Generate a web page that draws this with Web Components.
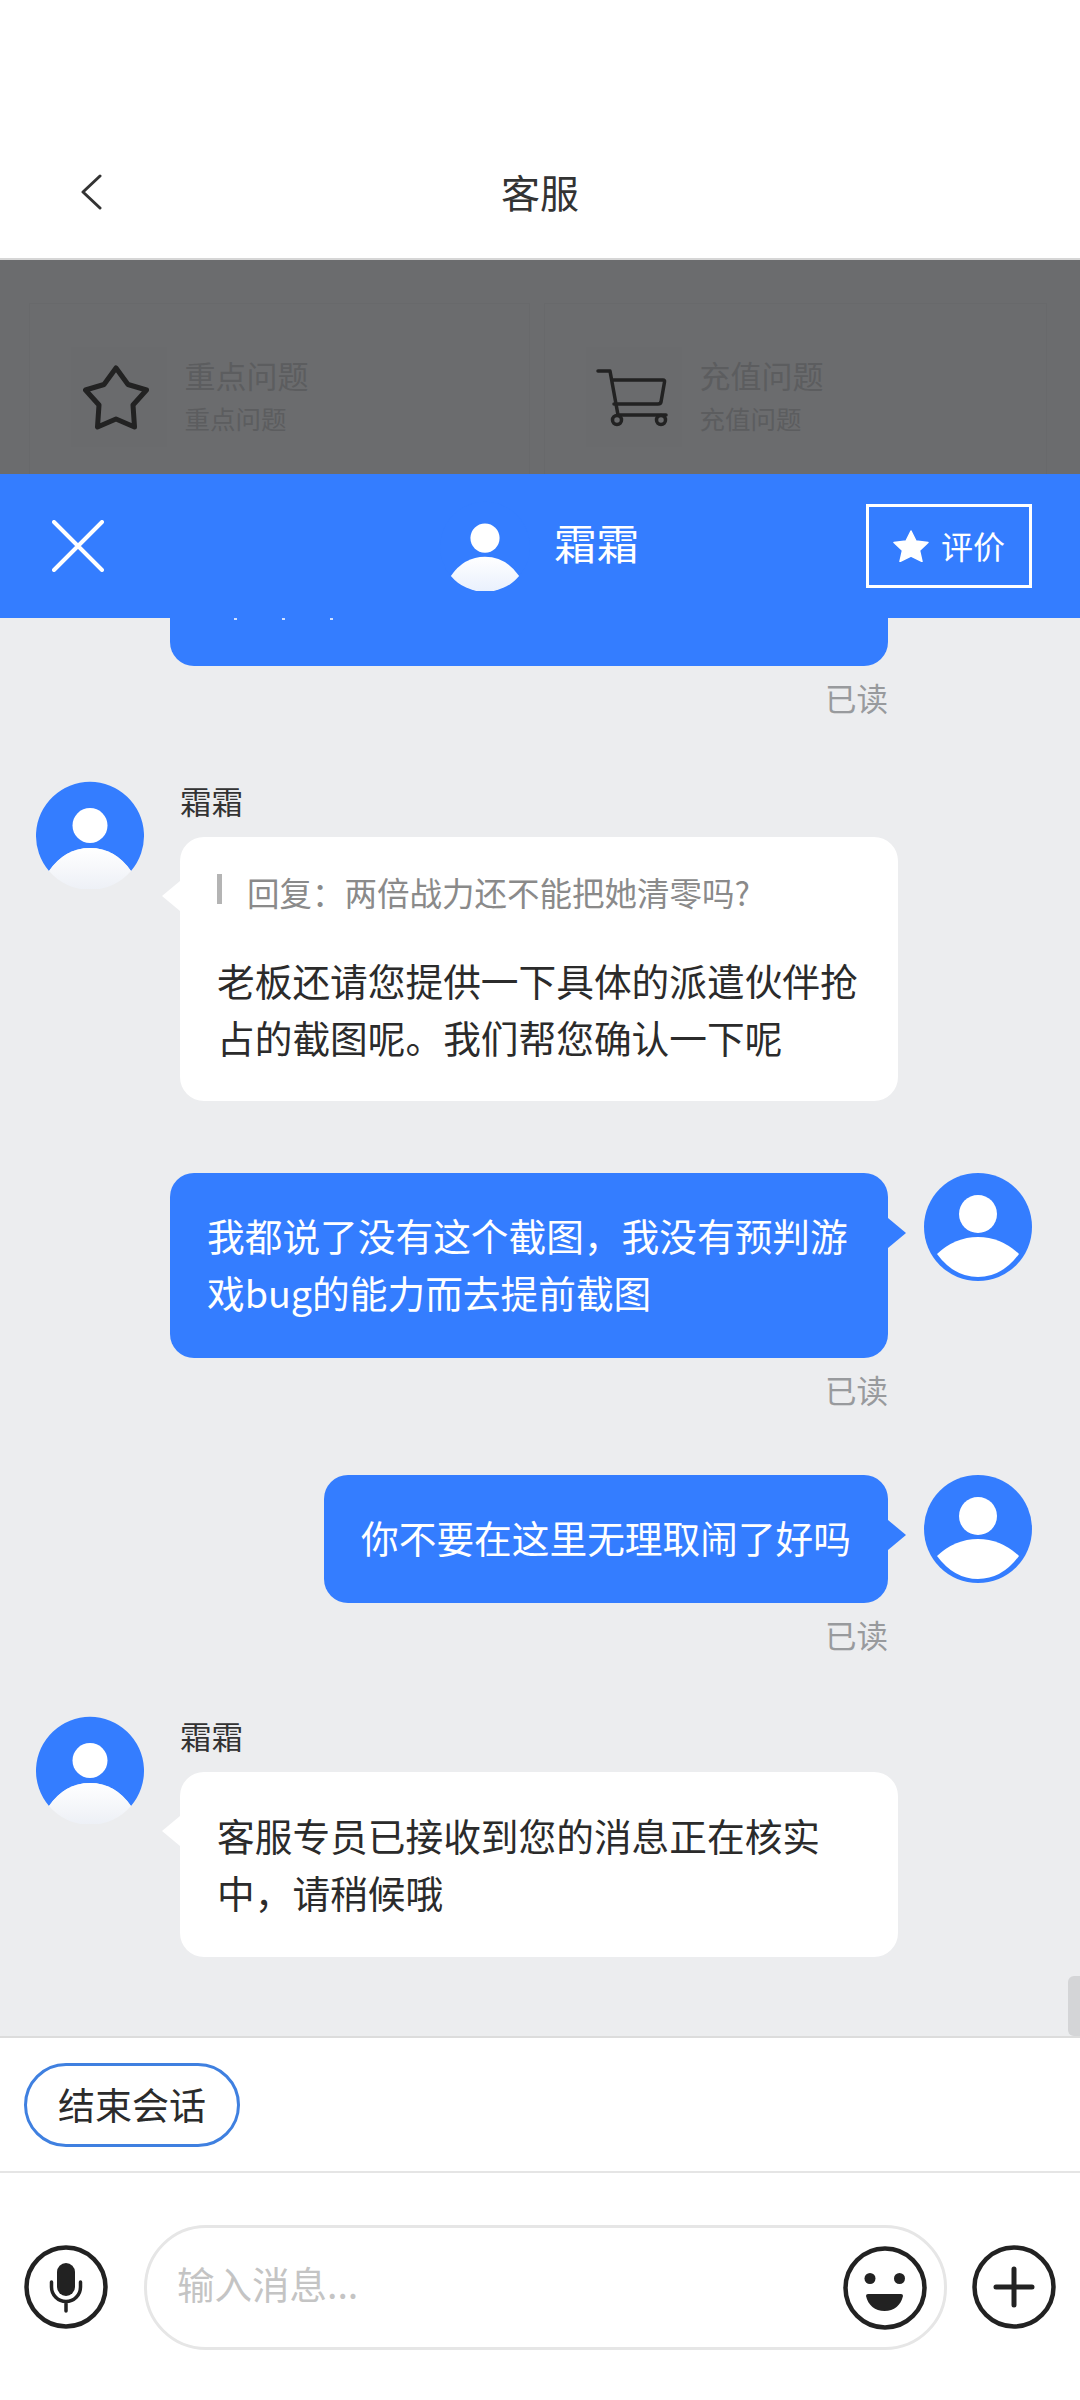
<!DOCTYPE html>
<html lang="zh-CN"><head><meta charset="utf-8"><title>客服</title>
<style>
html,body{margin:0;padding:0;background:#fff}
body{width:1080px;height:2400px;overflow:hidden;font-family:"Noto Sans CJK SC","Noto Sans",sans-serif;color:#2b2b2b}
</style></head><body>
<app-shell>
  <top-bar title-text="客服"></top-bar>
  <faq-panel></faq-panel>
  <chat-header name="霜霜"></chat-header>
  <chat-list>
    <cut-bubble></cut-bubble>
    <read-tip></read-tip>
    <msg-left name="霜霜" quote="回复：两倍战力还不能把她清零吗?" style="margin-top:58px">老板还请您提供一下具体的派遣伙伴抢占的截图呢。我们帮您确认一下呢</msg-left>
    <msg-right style="margin-top:72px">我都说了没有这个截图，我没有预判游戏bug的能力而去提前截图</msg-right>
    <read-tip></read-tip>
    <msg-right style="margin-top:60px">你不要在这里无理取闹了好吗</msg-right>
    <read-tip></read-tip>
    <msg-left name="霜霜" style="margin-top:56px">客服专员已接收到您的消息正在核实中，请稍候哦</msg-left>
  </chat-list>
  <quick-bar><pill-button>结束会话</pill-button></quick-bar>
  <input-bar></input-bar>
</app-shell>
<script>
const FONT='"Noto Sans CJK SC","Noto Sans",sans-serif';
function def(name,html){
  customElements.define(name,class extends HTMLElement{
    connectedCallback(){
      if(this.shadowRoot)return;
      const r=this.attachShadow({mode:'open'});
      r.innerHTML=typeof html==='function'?html(this):html;
    }
  });
}
const avatarSvg=(size,kind,id)=>{
  const ring=kind==='ring';
  const head=ring?'<circle cx="54" cy="41" r="19" fill="#fff"/>':'<circle cx="54" cy="44.5" r="17.5" fill="#fff"/>';
  const body=ring
    ?'<path d="M13 81Q31 64 54 64Q77 64 95 81Q78 104 54 104Q30 104 13 81Z" fill="#fff"/>'
    :`<path d="M13 90Q29 67 54 67Q79 67 95 90A54 54 0 0 1 13 90Z" fill="url(#${id})"/>`;
  const bottomStop=kind==='head'?'#e9f0fd':'#edf0f6';
  return `<svg width="${size}" height="${size}" viewBox="0 0 108 108" style="display:block;flex:none">
    <defs><linearGradient id="${id}" x1="0" y1="0" x2="0" y2="1"><stop offset="0" stop-color="#fff"/><stop offset="1" stop-color="${bottomStop}"/></linearGradient></defs>
    <path d="${kind==='left'||kind==='head'?'M13 90A54 54 0 1 1 95 90Q79 67 54 67Q29 67 13 90Z':'M0 54a54 54 0 1 0 108 0a54 54 0 1 0-108 0Z'}" fill="#347dff"/>
    ${head}${body}</svg>`;
};

def('app-shell',`<style>:host{display:flex;flex-direction:column;width:1080px;height:2400px;background:#fff}</style><slot></slot>`);

def('top-bar',el=>`<style>
:host{display:flex;align-items:center;justify-content:center;box-sizing:border-box;height:260px;padding-top:130px;padding-bottom:0;background:#fff;border-bottom:2px solid #d6d6d6;position:relative;font-family:${FONT}}
.back{position:absolute;left:78px;top:174px}
.t{font-size:39px;line-height:60px;color:#333;margin-top:-6px}
</style>
<svg class="back" width="26" height="36" viewBox="0 0 26 36"><path d="M22 2 5 18l17 16" fill="none" stroke="#333" stroke-width="3" stroke-linecap="round" stroke-linejoin="round"/></svg>
<div class="t">${el.getAttribute('title-text')}</div>`);

def('faq-panel',`<style>
:host{display:grid;grid-template-columns:501px 503px;column-gap:14px;box-sizing:border-box;height:214px;padding:43px 33px 0 29px;background:#6b6c6e;font-family:${FONT};overflow:hidden}
.card{display:flex;align-items:flex-start;border:1px solid #68696b;border-bottom:0;height:200px;box-sizing:border-box;padding:43px 0 0 41px}
.ico{width:96px;height:100px;flex:none;background:#6a6b6d}
.ico svg{display:block}
.star{margin:18px 0 0 12px}
.cart{margin:21px 0 0 10px}
.txt{margin-left:17.500px;padding-top:8px}
.a{font-size:31px;line-height:40px;color:#5c5d5f}
.b{font-size:25.500px;line-height:36px;color:#5c5d5f;margin-top:5px}
</style>
<div class="card"><div class="ico"><svg class="star" width="66" height="65" viewBox="0 0 66 65"><path d="M33 3 45 19.500 63.500 25 50 40 51.500 62 33 54 14.500 62 16 40 2.500 25 21 19.500Z" fill="none" stroke="#222" stroke-width="5" stroke-linejoin="round"/></svg></div><div class="txt"><div class="a">重点问题</div><div class="b">重点问题</div></div></div>
<div class="card"><div class="ico"><svg class="cart" width="72" height="60" viewBox="0 0 72 60"><path d="M2 3H14L22 47H70M16 12H67Q69 12 68.500 14L65 34Q64.500 36 62 36H18" fill="none" stroke="#222" stroke-width="3.500" stroke-linejoin="round" stroke-linecap="round"/><circle cx="21" cy="52" r="4.500" fill="none" stroke="#222" stroke-width="3.500"/><circle cx="65" cy="52" r="4.500" fill="none" stroke="#222" stroke-width="3.500"/></svg></div><div class="txt"><div class="a">充值问题</div><div class="b">充值问题</div></div></div>`);

def('chat-header',el=>`<style>
:host{display:flex;align-items:center;box-sizing:border-box;height:144px;padding:0 48px 0 52px;background:#347dff;color:#fff;font-family:${FONT};position:relative;z-index:1}
.x{flex:none}
.mid{display:flex;align-items:center;margin-left:336px;flex:1}
.n{font-size:42.500px;line-height:60px;margin-left:24px;margin-top:-8px}
.rate{display:flex;align-items:center;justify-content:center;gap:12px;box-sizing:border-box;width:166px;height:84px;border:3px solid #fff;font-size:32px;line-height:44px}
.rate span{margin-top:-3px}
</style>
<svg class="x" width="52" height="52" viewBox="0 0 52 52"><path d="M2 2 50 50M50 2 2 50" stroke="#fff" stroke-width="4" stroke-linecap="round"/></svg>
<div class="mid">${avatarSvg(90,'head','gh')}<span class="n">${el.getAttribute('name')}</span></div>
<div class="rate"><svg width="36" height="32" viewBox="0 0 36 32"><path d="M18 1 23 11 35 12.500 26.500 20.500 29 31.500 18 26 7 31.500 9.500 20.500 1 12.500 13 11Z" fill="#fff" stroke="#fff" stroke-width="1.500" stroke-linejoin="round"/></svg><span>评价</span></div>`);

def('chat-list',`<style>
:host{display:flex;flex-direction:column;flex:1;min-height:0;background:#ecedef;position:relative;overflow:hidden;font-family:${FONT}}
.bar{position:absolute;right:0;bottom:0;width:12px;height:60px;background:#d4d5d7;border-radius:6px 0 0 6px}
</style><slot></slot><div class="bar"></div>`);

def('cut-bubble',`<style>
:host{display:flex;box-sizing:border-box;width:718px;height:48px;margin-left:170px;background:#347dff;border-radius:0 0 24px 24px;gap:45px;padding-left:64px}
i{width:3px;height:2px;background:#cfe0ff}
</style><i></i><i></i><i></i>`);

def('read-tip',`<style>
:host{display:block;box-sizing:border-box;width:888px;margin-top:8px;height:49px;text-align:right;font-size:31.500px;line-height:46px;color:#989a9d}
</style>已读`);

def('msg-left',el=>{
  const q=el.getAttribute('quote');
  return `<style>
:host{display:flex;padding-left:36px;font-family:${FONT}}
.c{margin-left:36px;width:718px}
.n{font-size:31.500px;line-height:38px;margin-bottom:18px;color:#333}
.b{position:relative;background:#fff;border-radius:24px;padding:${q?'35px 37px 36px':'34px 37px 37px'};font-size:37.700px;line-height:57px;color:#2b2b2b}
.b::before{content:"";position:absolute;left:-18px;top:44px;width:18px;height:30px;background:#fff;clip-path:polygon(100% 0,0 50%,100% 100%)}
.q{box-sizing:border-box;height:30px;border-left:5px solid #b4b4b4;padding:3px 0 0 25px;font-size:32.500px;line-height:30px;white-space:nowrap;color:#8a8a8a;margin:2px 0 47px}
</style>${avatarSvg(108,'left','a'+Math.random().toString(36).slice(2))}
<div class="c"><div class="n">${el.getAttribute('name')}</div><div class="b">${q?`<div class="q">${q}</div>`:''}<slot></slot></div></div>`;
});

def('msg-right',`<style>
:host{display:flex;justify-content:flex-end;align-items:flex-start;padding-right:48px;font-family:${FONT}}
.b{position:relative;box-sizing:border-box;max-width:718px;background:#347dff;color:#fff;border-radius:24px;padding:33px 37px 38px;font-size:37.700px;line-height:57px;margin-right:36px}
.b::after{content:"";position:absolute;right:-18px;top:45px;width:18px;height:30px;background:#347dff;clip-path:polygon(0 0,100% 50%,0 100%)}
</style><div class="b"><slot></slot></div>`+avatarSvg(108,'ring','r'));

def('quick-bar',`<style>
:host{display:flex;align-items:flex-start;box-sizing:border-box;height:137px;padding:25px 0 0 24px;border-top:2px solid #dcdcdc;border-bottom:2px solid #e5e5e5;background:#fff}
</style><slot></slot>`);

def('pill-button',`<style>
:host{display:flex;align-items:center;justify-content:center;box-sizing:border-box;width:216px;height:84px;padding-bottom:3px;border:3px solid #3f80e0;border-radius:42px;font-size:37px;line-height:50px;color:#2b2b2b;font-family:${FONT}}
</style><slot></slot>`);

def('input-bar',`<style>
:host{display:flex;align-items:flex-start;box-sizing:border-box;flex:none;height:227px;padding:52px 24px 0 24px;background:#fff;font-family:${FONT}}
.field{display:flex;align-items:center;justify-content:space-between;box-sizing:border-box;width:803px;height:125px;margin:0 25px 0 36px;border:3px solid #e6e6e6;border-radius:62px;padding:0 17px 0 30px}
.ph{font-size:37.500px;line-height:50px;color:#c4c4c4;margin-top:-10px}
svg{display:block;flex:none}
.side{margin-top:20px}
</style>
<svg class="side" width="84" height="84" viewBox="0 0 84 84"><circle cx="42" cy="42" r="39.500" fill="none" stroke="#222" stroke-width="4.500"/><rect x="33" y="18" width="18" height="33" rx="9" fill="#222"/><path d="M27.500 37V42A14.500 14.500 0 0 0 56.500 42V37M42 56.500V66" fill="none" stroke="#222" stroke-width="3.500" stroke-linecap="round"/></svg>
<div class="field"><span class="ph">输入消息...</span>
<svg width="84" height="84" viewBox="0 0 84 84"><circle cx="42" cy="42" r="39.500" fill="none" stroke="#222" stroke-width="4.500"/><circle cx="27" cy="32.500" r="5.500" fill="#222"/><circle cx="56.500" cy="32.500" r="5.500" fill="#222"/><path d="M25 48H58Q60 48 60 50C58 59 51 65 41.500 65S25 59 23 50Q23 48 25 48Z" fill="#222"/></svg></div>
<svg class="side" width="84" height="84" viewBox="0 0 84 84"><circle cx="42" cy="42" r="39.500" fill="none" stroke="#222" stroke-width="4.500"/><path d="M24 42H60M42 24V60" stroke="#222" stroke-width="5" stroke-linecap="round"/></svg>`);
</script>
</body></html>
